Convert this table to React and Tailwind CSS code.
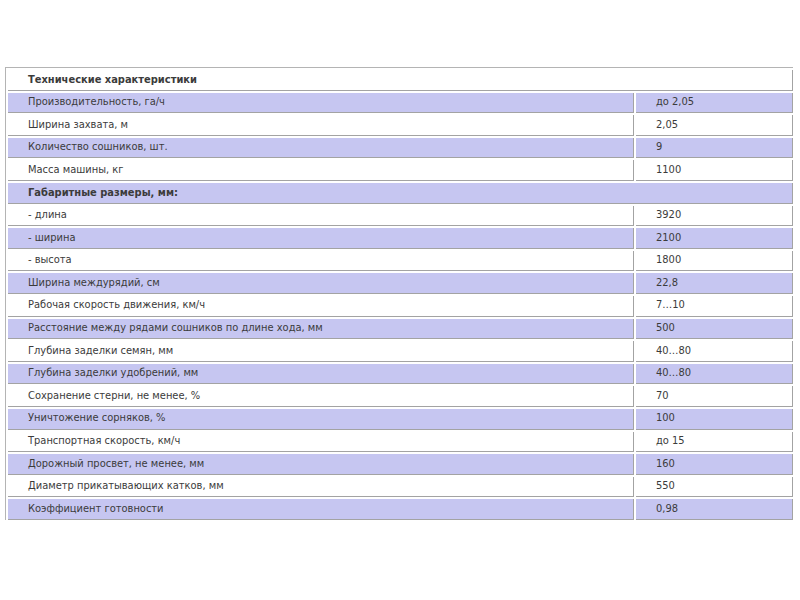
import React from 'react'

const rows = [
    { label: 'Производительность, га/ч', value: 'до 2,05' },
    { label: 'Ширина захвата, м', value: '2,05' },
    { label: 'Количество сошников, шт.', value: '9' },
    { label: 'Масса машины, кг', value: '1100' },
    { label: 'Габаритные размеры, мм:', head: true },
    { label: '- длина', value: '3920' },
    { label: '- ширина', value: '2100' },
    { label: '- высота', value: '1800' },
    { label: 'Ширина междурядий, см', value: '22,8' },
    { label: 'Рабочая скорость движения, км/ч', value: '7…10' },
    { label: 'Расстояние между рядами сошников по длине хода, мм', value: '500' },
    { label: 'Глубина заделки семян, мм', value: '40…80' },
    { label: 'Глубина заделки удобрений, мм', value: '40…80' },
    { label: 'Сохранение стерни, не менее, %', value: '70' },
    { label: 'Уничтожение сорняков, %', value: '100' },
    { label: 'Транспортная скорость, км/ч', value: 'до 15' },
    { label: 'Дорожный просвет, не менее, мм', value: '160' },
    { label: 'Диаметр прикатывающих катков, мм', value: '550' },
    { label: 'Коэффициент готовности', value: '0,98' },
]

function Cell({ children, bg, className = '' }) {
    return (
        <div className={`h-[20.6px] flex items-center pl-5 border-b border-r border-[#a3a3a3] ${bg} ${className}`}>
            {children}
        </div>
    )
}

function App() {
    return (
        <div className="w-[800px] h-[600px] bg-white pt-[67px] pl-[5px]" style={{ fontFamily: '"DejaVu Sans Condensed", "Liberation Sans", Arial, sans-serif' }}>
            <div className="w-[788px] border-t border-l border-[#b4b4b4] pt-[2px] pl-[2px] flex flex-col gap-[2px] text-[11px] text-[#3b3b3b]">
                <Cell bg="bg-white" className="font-bold">Технические характеристики</Cell>
                {rows.map((r, i) => {
                    const bg = i % 2 === 0 ? 'bg-[#c6c6f1]' : 'bg-white'
                    if (r.head) {
                        return <Cell key={i} bg={bg} className="font-bold">{r.label}</Cell>
                    }
                    return (
                        <div key={i} className="flex gap-[2px]">
                            <Cell bg={bg} className="w-[626px]">{r.label}</Cell>
                            <Cell bg={bg} className="flex-1">{r.value}</Cell>
                        </div>
                    )
                })}
            </div>
        </div>
    )
}

export default App
